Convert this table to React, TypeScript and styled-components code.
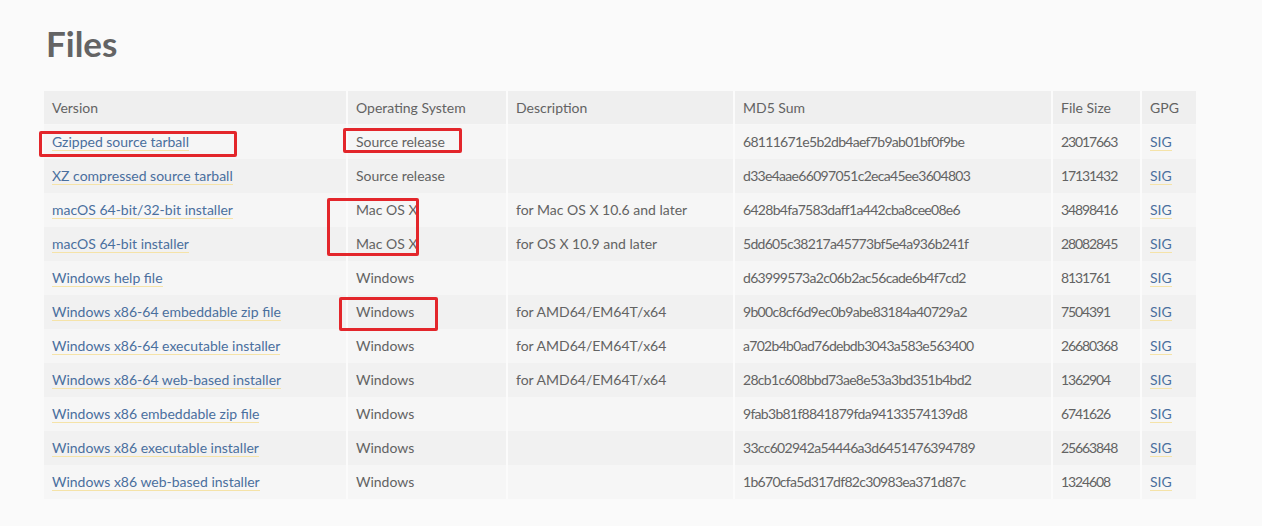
import React from "react";
import styled, { createGlobalStyle } from "styled-components";

const Global = createGlobalStyle`
  html, body { margin: 0; padding: 0; background: #fafafa; }
  body { font-family: Lato, "Noto Sans", sans-serif; }
`;

const Page = styled.div`
  position: relative;
  width: 1262px;
  height: 526px;
  padding: 0 0 0 44px;
  box-sizing: border-box;
  overflow: hidden;
`;

const Title = styled.h2`
  margin: 0;
  padding: 25px 0 0 2px;
  height: 91px;
  box-sizing: border-box;
  font-size: 35px;
  line-height: 36px;
  font-weight: 700;
  color: #646464;
`;

const Table = styled.table`
  border-collapse: collapse;
  table-layout: fixed;
  width: 1152px;
  font-size: 14px;
  color: #636363;
`;

const Th = styled.th<{ w: number }>`
  box-sizing: border-box;
  width: ${(p) => p.w}px;
  height: 33px;
  padding: 0 8px;
  text-align: left;
  font-weight: 400;
  background: #efefef;
  border-left: 2px solid #fbfbfb;
  border-bottom: 1px solid #f7f7f7;
  white-space: nowrap;
  &:first-child { border-left: none; }
`;

const Tr = styled.tr<{ alt: boolean }>`
  background: ${(p) => (p.alt ? "#f1f1f1" : "#f6f6f6")};
`;

const Td = styled.td<{ spacing?: number }>`
  height: 34px;
  padding: 0 8px;
  border-left: 2px solid #fbfbfb;
  white-space: nowrap;
  letter-spacing: ${(p) => (p.spacing ? `${p.spacing}px` : "normal")};
  &:first-child { border-left: none; }
`;

const Link = styled.a`
  color: #4a6f9e;
  text-decoration: none;
  border-bottom: 1px solid #f5e3a8;
`;

const Mark = styled.div`
  position: absolute;
  border: 3px solid #e3262b;
  border-radius: 2px;
  box-sizing: border-box;
`;

const cols = [
  ["Version", 303],
  ["Operating System", 160],
  ["Description", 227],
  ["MD5 Sum", 318],
  ["File Size", 89],
  ["GPG", 55],
] as const;

const rows: [string, string, string, string, string][] = [
  ["Gzipped source tarball", "Source release", "", "68111671e5b2db4aef7b9ab01bf0f9be", "23017663"],
  ["XZ compressed source tarball", "Source release", "", "d33e4aae66097051c2eca45ee3604803", "17131432"],
  ["macOS 64-bit/32-bit installer", "Mac OS X", "for Mac OS X 10.6 and later", "6428b4fa7583daff1a442cba8cee08e6", "34898416"],
  ["macOS 64-bit installer", "Mac OS X", "for OS X 10.9 and later", "5dd605c38217a45773bf5e4a936b241f", "28082845"],
  ["Windows help file", "Windows", "", "d63999573a2c06b2ac56cade6b4f7cd2", "8131761"],
  ["Windows x86-64 embeddable zip file", "Windows", "for AMD64/EM64T/x64", "9b00c8cf6d9ec0b9abe83184a40729a2", "7504391"],
  ["Windows x86-64 executable installer", "Windows", "for AMD64/EM64T/x64", "a702b4b0ad76debdb3043a583e563400", "26680368"],
  ["Windows x86-64 web-based installer", "Windows", "for AMD64/EM64T/x64", "28cb1c608bbd73ae8e53a3bd351b4bd2", "1362904"],
  ["Windows x86 embeddable zip file", "Windows", "", "9fab3b81f8841879fda94133574139d8", "6741626"],
  ["Windows x86 executable installer", "Windows", "", "33cc602942a54446a3d6451476394789", "25663848"],
  ["Windows x86 web-based installer", "Windows", "", "1b670cfa5d317df82c30983ea371d87c", "1324608"],
];

const marks = [
  { left: 39, top: 131, width: 198, height: 26 },
  { left: 343, top: 128, width: 119, height: 25 },
  { left: 327, top: 198, width: 92, height: 58 },
  { left: 339, top: 297, width: 99, height: 34 },
];

export default function App() {
  return (
    <Page>
      <Global />
      <Title>Files</Title>
      <Table>
        <thead>
          <tr>
            {cols.map(([name, w]) => (
              <Th key={name} w={w}>{name}</Th>
            ))}
          </tr>
        </thead>
        <tbody>
          {rows.map((r, i) => (
            <Tr key={r[0]} alt={i % 2 === 1}>
              <Td><Link href="#">{r[0]}</Link></Td>
              <Td>{r[1]}</Td>
              <Td>{r[2]}</Td>
              <Td spacing={-0.7}>{r[3]}</Td>
              <Td spacing={-1.1}>{r[4]}</Td>
              <Td><Link href="#">SIG</Link></Td>
            </Tr>
          ))}
        </tbody>
      </Table>
      {marks.map((m, i) => (
        <Mark key={i} style={{ left: m.left, top: m.top, width: m.width, height: m.height }} />
      ))}
    </Page>
  );
}
